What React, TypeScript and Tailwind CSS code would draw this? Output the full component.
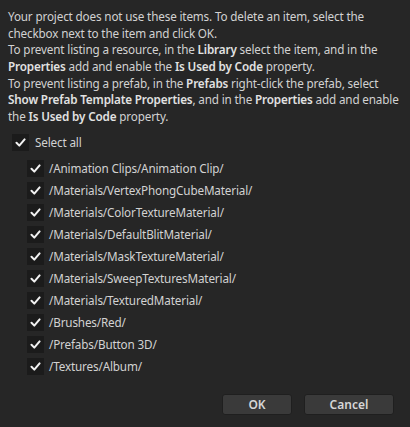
const items = [
  "/Animation Clips/Animation Clip/",
  "/Materials/VertexPhongCubeMaterial/",
  "/Materials/ColorTextureMaterial/",
  "/Materials/DefaultBlitMaterial/",
  "/Materials/MaskTextureMaterial/",
  "/Materials/SweepTexturesMaterial/",
  "/Materials/TexturedMaterial/",
  "/Brushes/Red/",
  "/Prefabs/Button 3D/",
  "/Textures/Album/",
];

function Check() {
  return (
    <span className="flex h-[17px] w-[17px] shrink-0 items-center justify-center bg-[#1b1b1b]">
      <svg width="11" height="11" viewBox="0 0 11 11" fill="none">
        <path d="M1.5 5.8 L4.3 8.6 L9.6 2.4" stroke="#f2f2f2" strokeWidth="2" strokeLinecap="round" strokeLinejoin="round" />
      </svg>
    </span>
  );
}

function B({ children }: { children: React.ReactNode }) {
  return <span className="font-semibold text-[#e2e2e2]">{children}</span>;
}

export default function App() {
  return (
    <div className="flex h-[427px] w-[410px] flex-col bg-[#262626] font-['Noto_Sans',sans-serif] text-[11.7px] tracking-[-0.15px] text-[#d2d2d2]">
      <p className="whitespace-nowrap pl-2 pt-2 leading-[16.67px]">
        Your project does not use these items. To delete an item, select the
        <br />
        checkbox next to the item and click OK.
        <br />
        To prevent listing a resource, in the <B>Library</B> select the item, and in the
        <br />
        <B>Properties</B> add and enable the <B>Is Used by Code</B> property.
        <br />
        To prevent listing a prefab, in the <B>Prefabs</B> right-click the prefab, select
        <br />
        <B>Show Prefab Template Properties</B>, and in the <B>Properties</B> add and enable
        <br />
        the <B>Is Used by Code</B> property.
      </p>
      <div className="mt-[9px] flex items-center gap-[6px] pl-3 leading-[17px]">
        <Check />
        <span>Select all</span>
      </div>
      <div className="mt-[9px] flex flex-col gap-[5px] pl-[27px] leading-[17px]">
        {items.map((item) => (
          <div key={item} className="flex items-center gap-[5px]">
            <Check />
            <span>{item}</span>
          </div>
        ))}
      </div>
      <div className="mt-auto flex justify-end gap-3 pb-3 pr-4">
        <button className="h-[21px] w-[70px] rounded-[3px] border border-[#1f1f1f] bg-[#3a3a3a] text-[12px] font-semibold tracking-normal text-[#d6d6d6]">
          OK
        </button>
        <button className="h-[21px] w-[90px] rounded-[3px] border border-[#1f1f1f] bg-[#3a3a3a] text-[12px] font-semibold tracking-normal text-[#d6d6d6]">
          Cancel
        </button>
      </div>
    </div>
  );
}
